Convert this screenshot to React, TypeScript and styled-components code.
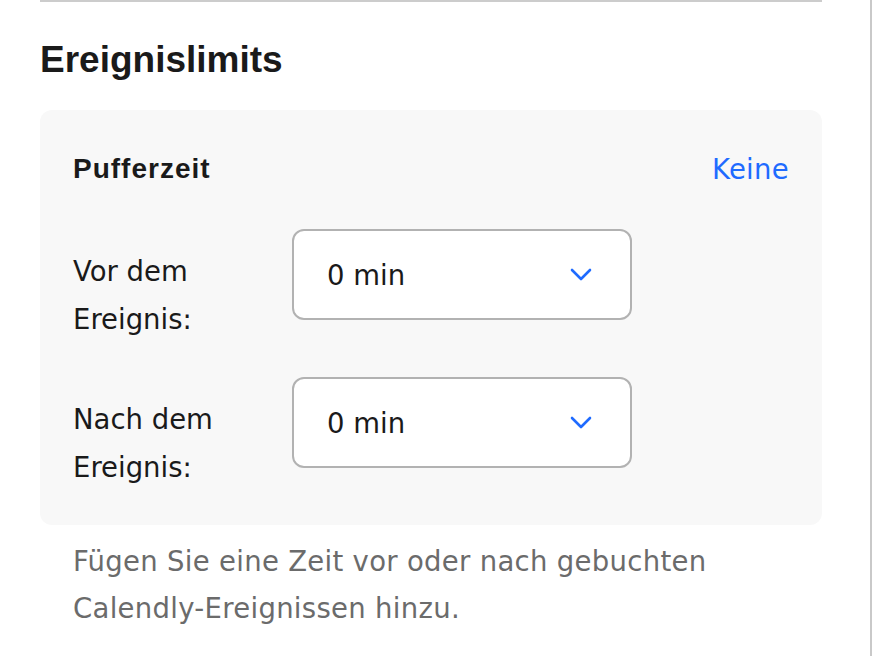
import React from 'react';
import styled, { createGlobalStyle } from 'styled-components';

const GlobalStyle = createGlobalStyle`
	html, body {
		margin: 0;
		padding: 0;
		background: #ffffff;
	}
	body {
		font-family: 'DejaVu Sans', 'Liberation Sans', sans-serif;
		color: #1a1a1a;
	}
`;

const boldFont = `'Liberation Sans', Arial, sans-serif`;

const Page = styled.div`
	display: flex;
	height: 656px;
	background: #ffffff;
	overflow: hidden;
`;

const Main = styled.div`
	width: 872px;
	flex-shrink: 0;
	box-sizing: border-box;
	padding: 0 48px 0 40px;
	border-right: 2px solid #c9c9c9;
	background: #ffffff;
`;

const Section = styled.section`
	border-top: 2px solid #cccccc;
	padding-top: 36px;
`;

const Heading = styled.h2`
	margin: 0 0 28px;
	font-family: ${boldFont};
	font-size: 37px;
	line-height: 44px;
	font-weight: 700;
	color: #1a1a1a;
`;

const Panel = styled.div`
	background: #f8f8f8;
	border-radius: 12px;
	padding: 41px 33px 34px;
`;

const PanelHeader = styled.div`
	display: flex;
	justify-content: space-between;
	align-items: center;
	height: 36px;
	margin-bottom: 42px;
`;

const PanelTitle = styled.div`
	font-family: ${boldFont};
	font-size: 28px;
	line-height: 36px;
	font-weight: 700;
	letter-spacing: 1px;
`;

const LinkButton = styled.button`
	border: none;
	background: none;
	padding: 0;
	font: inherit;
	font-size: 27.5px;
	line-height: 36px;
	letter-spacing: 0.3px;
	color: #1f6bff;
	cursor: pointer;
`;

const Rows = styled.div`
	display: flex;
	flex-direction: column;
	gap: 34px;
`;

const Row = styled.div`
	display: flex;
	align-items: flex-start;
`;

const Label = styled.label`
	width: 219px;
	padding-top: 18px;
	font-size: 27.5px;
	line-height: 48px;
	color: #1a1a1a;
`;

const Select = styled.div`
	width: 340px;
	height: 91px;
	box-sizing: border-box;
	display: flex;
	align-items: center;
	justify-content: space-between;
	padding: 0 38px 0 33px;
	background: #ffffff;
	border: 2px solid #b2b2b2;
	border-radius: 12px;
	font-size: 27.5px;
	color: #1a1a1a;
	svg {
		width: 22px;
		height: 13px;
	}
`;

const HelpText = styled.p`
	margin: 13px 0 0;
	padding-left: 33px;
	font-size: 27.5px;
	line-height: 47px;
	letter-spacing: 0.3px;
	color: #6b6b6b;
`;

const Chevron = () => (
	<svg viewBox="0 0 22 13" fill="none">
		<path d="M2 2l9 9 9-9" stroke="#1f6bff" strokeWidth="2.6" strokeLinecap="round" strokeLinejoin="round" />
	</svg>
);

const buffers = [
	{ label: ['Vor dem', 'Ereignis:'], value: '0 min' },
	{ label: ['Nach dem', 'Ereignis:'], value: '0 min' },
];

const App = () => {
	return (
		<>
			<GlobalStyle />
			<Page>
				<Main>
					<Section>
						<Heading>Ereignislimits</Heading>
						<Panel>
							<PanelHeader>
								<PanelTitle>Pufferzeit</PanelTitle>
								<LinkButton>Keine</LinkButton>
							</PanelHeader>
							<Rows>
								{buffers.map((b) => (
									<Row key={b.label[0]}>
										<Label>
											{b.label[0]}
											<br />
											{b.label[1]}
										</Label>
										<Select>
											<span>{b.value}</span>
											<Chevron />
										</Select>
									</Row>
								))}
							</Rows>
						</Panel>
						<HelpText>
							Fügen Sie eine Zeit vor oder nach gebuchten
							<br />
							Calendly-Ereignissen hinzu.
						</HelpText>
					</Section>
				</Main>
			</Page>
		</>
	);
};

export default App;
